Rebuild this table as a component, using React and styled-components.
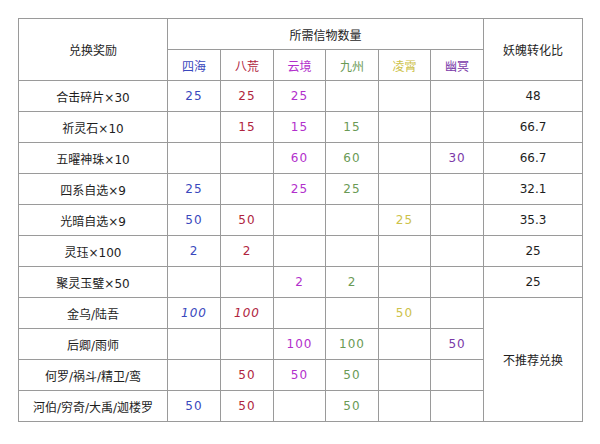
import React from 'react';
import styled, { createGlobalStyle } from 'styled-components';

const Global = createGlobalStyle`
  body {
    margin: 0;
    background: #ffffff;
    font-family: "DejaVu Sans", "Noto Sans CJK SC", sans-serif;
  }
`;

const colors = {
  sihai: '#3a48bd',
  bahuang: '#b0243e',
  yunjing: '#b22fcc',
  jiuzhou: '#6a9a55',
  lingxiao: '#cdc24a',
  youming: '#7a38a8',
};

const regions = [
  { key: 'sihai', name: '四海' },
  { key: 'bahuang', name: '八荒' },
  { key: 'yunjing', name: '云境' },
  { key: 'jiuzhou', name: '九州' },
  { key: 'lingxiao', name: '凌霄' },
  { key: 'youming', name: '幽冥' },
];

const widths = [149, 53, 53, 52, 53, 52, 53, 99];

const rows = [
  { name: '合击碎片×30', vals: ['25', '25', '25', '', '', ''], ratio: '48' },
  { name: '祈灵石×10', vals: ['', '15', '15', '15', '', ''], ratio: '66.7' },
  { name: '五曜神珠×10', vals: ['', '', '60', '60', '', '30'], ratio: '66.7' },
  { name: '四系自选×9', vals: ['25', '', '25', '25', '', ''], ratio: '32.1' },
  { name: '光暗自选×9', vals: ['50', '50', '', '', '25', ''], ratio: '35.3' },
  { name: '灵珏×100', vals: ['2', '2', '', '', '', ''], ratio: '25' },
  { name: '聚灵玉璧×50', vals: ['', '', '2', '2', '', ''], ratio: '25' },
  { name: '金乌/陆吾', vals: ['100', '100', '', '', '50', ''], ratio: '不推荐兑换', span: 4 },
  { name: '后卿/雨师', vals: ['', '', '100', '100', '', '50'] },
  { name: '何罗/祸斗/精卫/鸾', vals: ['', '50', '50', '50', '', ''] },
  { name: '河伯/穷奇/大禹/迦楼罗', vals: ['50', '50', '', '50', '', ''] },
];

const Page = styled.div`
  padding: 18px 0 0 18px;
`;

const Table = styled.table`
  border-collapse: collapse;
  table-layout: fixed;
  width: 565px;
  font-size: 12px;
  color: #222;
`;

const Col = styled.col`
  width: ${(p) => p.$w}px;
`;

const Cell = styled.td`
  border: 1px solid #9a9a9a;
  height: 30px;
  padding: 0;
  text-align: center;
  vertical-align: middle;
  color: ${(p) => p.$color || '#1e1e1e'};
  font-style: ${(p) => (p.$slant ? 'italic' : 'normal')};
  letter-spacing: ${(p) => (p.$num ? '1px' : '0')};
  white-space: nowrap;
`;

const Head = styled(Cell).attrs({ as: 'th' })`
  font-weight: normal;
`;

export default function App() {
  return (
    <Page>
      <Global />
      <Table>
        <colgroup>
          {widths.map((w, i) => (
            <Col key={i} $w={w} />
          ))}
        </colgroup>
        <thead>
          <tr>
            <Head rowSpan={2}>兑换奖励</Head>
            <Head colSpan={6}>所需信物数量</Head>
            <Head rowSpan={2}>妖魄转化比</Head>
          </tr>
          <tr>
            {regions.map((r) => (
              <Head key={r.key} $color={colors[r.key]}>
                {r.name}
              </Head>
            ))}
          </tr>
        </thead>
        <tbody>
          {rows.map((row) => (
            <tr key={row.name}>
              <Cell>{row.name}</Cell>
              {row.vals.map((v, i) => (
                <Cell
                  key={i}
                  $num
                  $slant={v === '100' && i < 2}
                  $color={colors[regions[i].key]}
                >
                  {v}
                </Cell>
              ))}
              {row.ratio && <Cell rowSpan={row.span || 1}>{row.ratio}</Cell>}
            </tr>
          ))}
        </tbody>
      </Table>
    </Page>
  );
}
